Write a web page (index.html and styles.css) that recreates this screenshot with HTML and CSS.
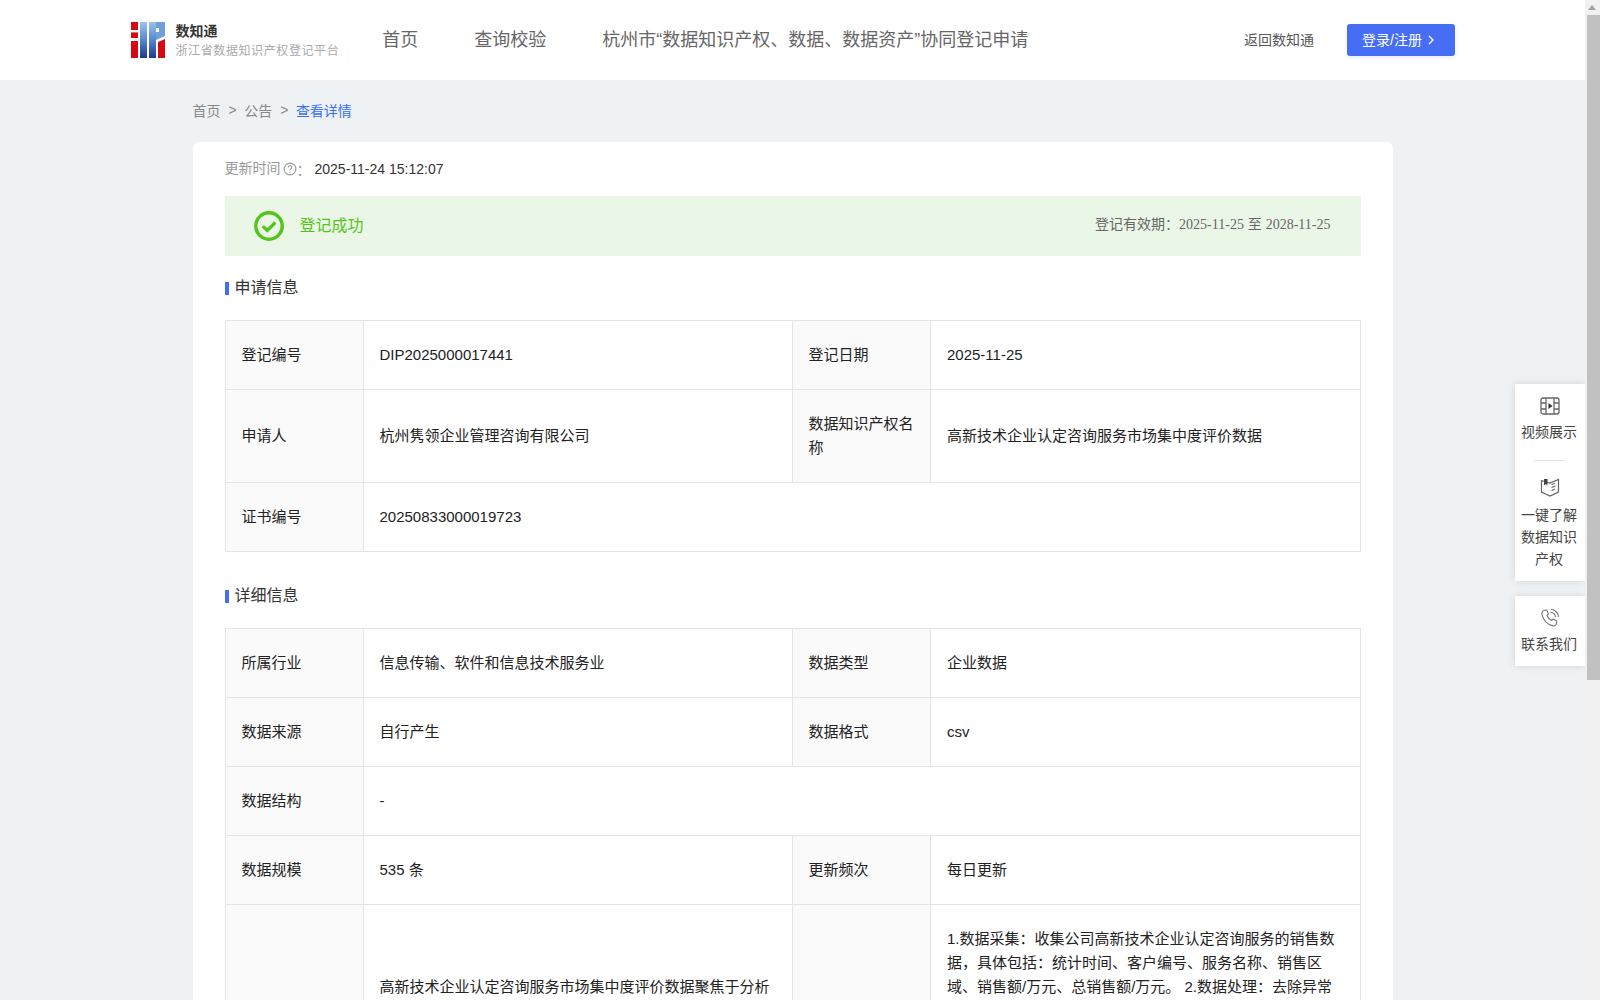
FILE: index.html
```html
<!DOCTYPE html>
<html lang="zh-CN">
<head>
<meta charset="utf-8">
<title>查看详情 - 数知通</title>
<link rel="stylesheet" href="styles.css">
</head>
<body>
<div class="app">
  <div class="page">
    <header class="topbar">
      <a class="brand">
        <svg class="brand-logo" viewBox="0 0 34 36" aria-hidden="true">
          <defs>
            <linearGradient id="lg" x1="0" y1="0" x2="0" y2="1">
              <stop offset="0" stop-color="#9cc3ea"/>
              <stop offset=".45" stop-color="#5c8fd0"/>
              <stop offset="1" stop-color="#1f3a8c"/>
            </linearGradient>
          </defs>
          <rect x="0" y="0" width="7" height="36" fill="#d60a12"/>
          <rect x="0" y="8" width="7" height="2.4" fill="#fff"/>
          <rect x="0" y="16" width="7" height="3" fill="#fff"/>
          <rect x="9" y="0" width="7" height="36" fill="url(#lg)"/>
          <rect x="18" y="0" width="7" height="36" fill="url(#lg)"/>
          <path d="M25 0H34V14L25 18Z" fill="#6f9fd8"/>
          <rect x="25" y="6" width="3" height="4" fill="#fff"/>
          <path d="M27 20L34 17V36H27Z" fill="#d60a12"/>
        </svg>
        <span class="brand-text">
          <span class="brand-name">数知通</span>
          <span class="brand-sub">浙江省数据知识产权登记平台</span>
        </span>
      </a>
      <nav class="nav">
        <a>首页</a>
        <a>查询校验</a>
        <a>杭州市“数据知识产权、数据、数据资产”协同登记申请</a>
      </nav>
      <div class="top-actions">
        <a class="back-link">返回数知通</a>
        <button class="login-btn" type="button"><span class="login-text">登录/注册</span>
          <svg class="login-chevron" viewBox="0 0 6 10" aria-hidden="true"><path d="M1 1l4 4-4 4" fill="none" stroke="#fff" stroke-width="1.300"/></svg>
        </button>
      </div>
    </header>

    <main class="content">
      <div class="crumbs">
        <span>首页</span><i class="sep">&gt;</i><span>公告</span><i class="sep">&gt;</i><span class="crumb-current">查看详情</span>
      </div>

      <section class="card">
        <div class="updated">
          <span class="updated-label">更新时间</span>
          <svg class="help-icon" viewBox="0 0 14 14" aria-hidden="true">
            <circle cx="7" cy="7" r="5.900" fill="none" stroke="#999" stroke-width="1.100"/>
            <path d="M5.200 5.500a1.800 1.800 0 1 1 2.700 1.500c-.6.350-.9.650-.9 1.300" fill="none" stroke="#999" stroke-width="1.100"/>
            <circle cx="7" cy="10.100" r=".7" fill="#999"/>
          </svg>
          <span class="updated-colon">：</span>
          <span class="updated-value">2025-11-24 15:12:07</span>
        </div>

        <div class="status">
          <svg class="status-icon" viewBox="0 0 30 30" aria-hidden="true">
            <circle cx="15" cy="15" r="13.200" fill="none" stroke="#52c41a" stroke-width="3.400"/>
            <path d="M8.800 15.200l4.500 4.300 8-8" fill="none" stroke="#52c41a" stroke-width="3.200"/>
          </svg>
          <span class="status-text">登记成功</span>
          <span class="status-valid">登记有效期：<span class="serif">2025-11-25</span> 至 <span class="serif">2028-11-25</span></span>
        </div>

        <h2 class="section-title">申请信息</h2>
        <table class="info">
          <colgroup><col class="c1"><col class="c2"><col class="c3"><col class="c4"></colgroup>
          <tr><th>登记编号</th><td>DIP2025000017441</td><th>登记日期</th><td>2025-11-25</td></tr>
          <tr><th>申请人</th><td>杭州隽领企业管理咨询有限公司</td><th>数据知识产权名称</th><td>高新技术企业认定咨询服务市场集中度评价数据</td></tr>
          <tr><th>证书编号</th><td colspan="3">20250833000019723</td></tr>
        </table>

        <h2 class="section-title second">详细信息</h2>
        <table class="info">
          <colgroup><col class="c1"><col class="c2"><col class="c3"><col class="c4"></colgroup>
          <tr><th>所属行业</th><td>信息传输、软件和信息技术服务业</td><th>数据类型</th><td>企业数据</td></tr>
          <tr><th>数据来源</th><td>自行产生</td><th>数据格式</th><td>csv</td></tr>
          <tr><th>数据结构</th><td colspan="3">-</td></tr>
          <tr><th>数据规模</th><td>535 条</td><th>更新频次</th><td>每日更新</td></tr>
          <tr>
            <th>数据描述</th>
            <td>高新技术企业认定咨询服务市场集中度评价数据聚焦于分析公司高新技术企业认定咨询服务在各销售区域的市场集中程度，反映服务的销售分布情况，为公司制定市场策略提供数据参考，便于了解各区域的市场竞争状况。</td>
            <th>处理规则</th>
            <td>1.数据采集：收集公司高新技术企业认定咨询服务的销售数据，具体包括：统计时间、客户编号、服务名称、销售区域、销售额/万元、总销售额/万元。 2.数据处理：去除异常值和重复记录，统一数据格式，按统计时间和销售区域进行归类汇总。 3.数据计算：根据各销售区域的销售额与总销售额计算市场份额，并据此得出市场集中度评价结果。 4.数据输出：将评价结果整理成表格形式，形成最终数据集合，按季度更新并归档保存，供后续查询校验使用。</td>
          </tr>
        </table>
      </section>
    </main>

    <aside class="float-tools">
      <div class="tool-group">
        <a class="tool">
          <svg class="tool-icon" viewBox="0 0 20 20" aria-hidden="true">
            <rect x="1" y="2" width="18" height="16" rx="2" fill="none" stroke="#666" stroke-width="1.300"/>
            <path d="M6 2v16M14 2v16M1 7h5M1 13h5M14 7h5M14 13h5" fill="none" stroke="#666" stroke-width="1.300"/>
            <path d="M8.500 7v6l4-3Z" fill="#333"/>
          </svg>
          <span class="tool-label">视频展示</span>
        </a>
        <div class="tool-divider"></div>
        <a class="tool tool-book">
          <svg class="tool-icon" viewBox="0 0 20 20" aria-hidden="true">
            <path d="M1.500 3.500 10 6l8.500-3.500v12.500L10 19l-8.500-4Z" fill="none" stroke="#666" stroke-width="1.200"/>
            <path d="M4 2h3.500v6.500L5.800 7 4 8.500Z" fill="#444"/>
            <path d="M11.500 7.500 15 6.500M11.500 10.500 15.500 9M11.500 13.500 15 12" fill="none" stroke="#666" stroke-width="1.200"/>
          </svg>
          <span class="tool-label">一键了解<br>数据知识<br>产权</span>
        </a>
      </div>
      <div class="tool-group">
        <a class="tool">
          <svg class="tool-icon" viewBox="0 0 20 20" aria-hidden="true">
            <path d="M4.500 2.200 6.800 2l1.700 4-1.500 1.400c.7 2.200 2.600 4.200 4.700 5l1.500-1.400 3.500 2-.2 2.500c-.2 1.500-1.900 2.800-3.500 2.400C7.500 16.500 3.300 12 2 6.600c-.3-1.900.9-3.900 2.500-4.400Z" fill="none" stroke="#777" stroke-width="1.100"/>
            <path d="M10.500 4.200a5.500 5.500 0 0 1 5 5M11 1.200a8.500 8.500 0 0 1 7.500 7.800" fill="none" stroke="#777" stroke-width="1.100"/>
          </svg>
          <span class="tool-label">联系我们</span>
        </a>
      </div>
    </aside>
  </div>

  <div class="scrollbar" aria-hidden="true">
    <div class="scroll-arrow"></div>
    <div class="scroll-thumb"></div>
  </div>
</div>
</body>
</html>
```

FILE: styles.css
```css
* { box-sizing: border-box; }

html, body {
  margin: 0;
  height: 100%;
}

body {
  font-family: "Liberation Sans", "Noto Sans CJK SC", sans-serif;
  font-size: 14px;
  color: #333;
  background: #eef2f5;
}

.app {
  display: flex;
  height: 100vh;
  overflow: hidden;
}

.page {
  position: relative;
  flex: 1;
  min-width: 0;
  overflow: hidden;
}

/* top bar */
.topbar {
  display: flex;
  align-items: center;
  height: 80px;
  padding: 0 130px 0 131px;
  background: #fff;
}

.brand {
  display: flex;
  align-items: center;
}

.brand-logo {
  width: 34px;
  height: 36px;
  margin-right: 10.500px;
}

.brand-text {
  display: flex;
  flex-direction: column;
  margin-top: 2px;
}

.brand-name {
  font-size: 14px;
  line-height: 20px;
  font-weight: 700;
  color: #333;
}

.brand-sub {
  font-size: 12px;
  line-height: 20px;
  letter-spacing: .6px;
  color: #aaa;
}

.nav {
  display: flex;
  gap: 56px;
  margin-left: 43px;
  margin-top: -4px;
  font-size: 18px;
  color: #666;
}

.top-actions {
  display: flex;
  align-items: center;
  gap: 33px;
  margin-left: auto;
}

.back-link {
  margin-bottom: 2px;
  color: #555;
  font-size: 14px;
}

.login-btn {
  display: flex;
  align-items: center;
  gap: 6px;
  width: 108px;
  height: 32px;
  padding: 0 0 0 15px;
  border: 0;
  border-radius: 3px;
  background: #456ef5;
  box-shadow: 0 2px 4px rgba(69, 110, 245, .12);
  color: #fff;
  font: inherit;
}

.login-text {
  margin-bottom: 3px;
}

.login-chevron {
  width: 6px;
  height: 10px;
}

/* content */
.content {
  width: 1200px;
  margin: 0 auto;
}

.crumbs {
  display: flex;
  align-items: center;
  height: 62px;
  padding-bottom: 2px;
  color: #888;
}

.sep {
  margin: 0 7.500px 0 8px;
  font-style: normal;
}

.crumb-current {
  color: #3a6ff5;
}

.card {
  padding: 13px 32px 32px;
  border-radius: 6px;
  background: #fff;
}

.updated {
  display: flex;
  align-items: center;
  height: 28px;
  margin-bottom: 13px;
}

.updated-label {
  margin-bottom: 4px;
  color: #999;
}

.updated-colon {
  width: 14px;
  color: #999;
}

.help-icon {
  width: 14px;
  height: 14px;
  margin-left: 2px;
}

.updated-value {
  margin-left: 4px;
  color: #333;
}

.status {
  display: flex;
  align-items: center;
  height: 60px;
  padding: 0 30px;
  background: #ebf7e6;
}

.status-icon {
  width: 30px;
  height: 30px;
  margin-right: 16px;
  margin-left: -1px;
}

.status-text {
  margin-bottom: 5px;
  font-size: 16px;
  color: #52c41a;
}

.status-valid {
  margin-left: auto;
  margin-bottom: 6px;
  color: #666;
}

.serif {
  font-family: "Liberation Serif", "Noto Sans CJK SC", serif;
}

.section-title {
  display: flex;
  align-items: center;
  margin: 20px 0 21px;
  padding-top: 1px;
  font-size: 16px;
  font-weight: 400;
  line-height: 22px;
  color: #333;
}

.section-title::before {
  content: "";
  width: 4px;
  height: 13px;
  margin: 1px 6px 0 0;
  background: #456ef5;
}

.section-title.second {
  margin-top: 32px;
}

.info {
  width: 1135px;
  table-layout: fixed;
  border-collapse: collapse;
  font-size: 15px;
  line-height: 24px;
  color: #222;
}

.c1 { width: 138px; }
.c2 { width: 429px; }
.c3 { width: 138.500px; }
.c4 { width: 429.500px; }

.info th,
.info td {
  padding: 22px 16px;
  border: 1px solid #e5e5e5;
  text-align: left;
  font-weight: 400;
  word-break: break-all;
}

.info th {
  background: #fafafa;
}

/* floating side tools */
.float-tools {
  position: absolute;
  top: 384px;
  right: 0;
  display: flex;
  flex-direction: column;
  gap: 15px;
  width: 70px;
}

.tool-group {
  display: flex;
  flex-direction: column;
  align-items: center;
  padding: 12px 0 11px;
  background: #fff;
  box-shadow: 0 0 8px rgba(0, 0, 0, .12);
}

.tool {
  display: flex;
  flex-direction: column;
  align-items: center;
  text-align: center;
  line-height: 22px;
  color: #444;
}

.tool-label {
  padding-right: 2px;
}

.tool-icon {
  width: 20px;
  height: 20px;
  margin-bottom: 5px;
}

.tool-book .tool-icon {
  margin-bottom: 7px;
}

.tool-divider {
  width: 32px;
  height: 1px;
  margin: 17px 0 16px;
  background: #e5e5e5;
}

/* scrollbar */
.scrollbar {
  display: flex;
  flex-direction: column;
  align-items: flex-end;
  flex: none;
  width: 15px;
  background: #f1f1f1;
}

.scroll-arrow {
  position: relative;
  width: 15px;
  height: 15px;
}

.scroll-arrow::after {
  content: "";
  position: absolute;
  top: 5px;
  left: 3px;
  border-left: 4.500px solid transparent;
  border-right: 4.500px solid transparent;
  border-bottom: 5px solid #a3a3a3;
}

.scroll-thumb {
  width: 13px;
  height: 665px;
  background: #c1c1c1;
}
```
